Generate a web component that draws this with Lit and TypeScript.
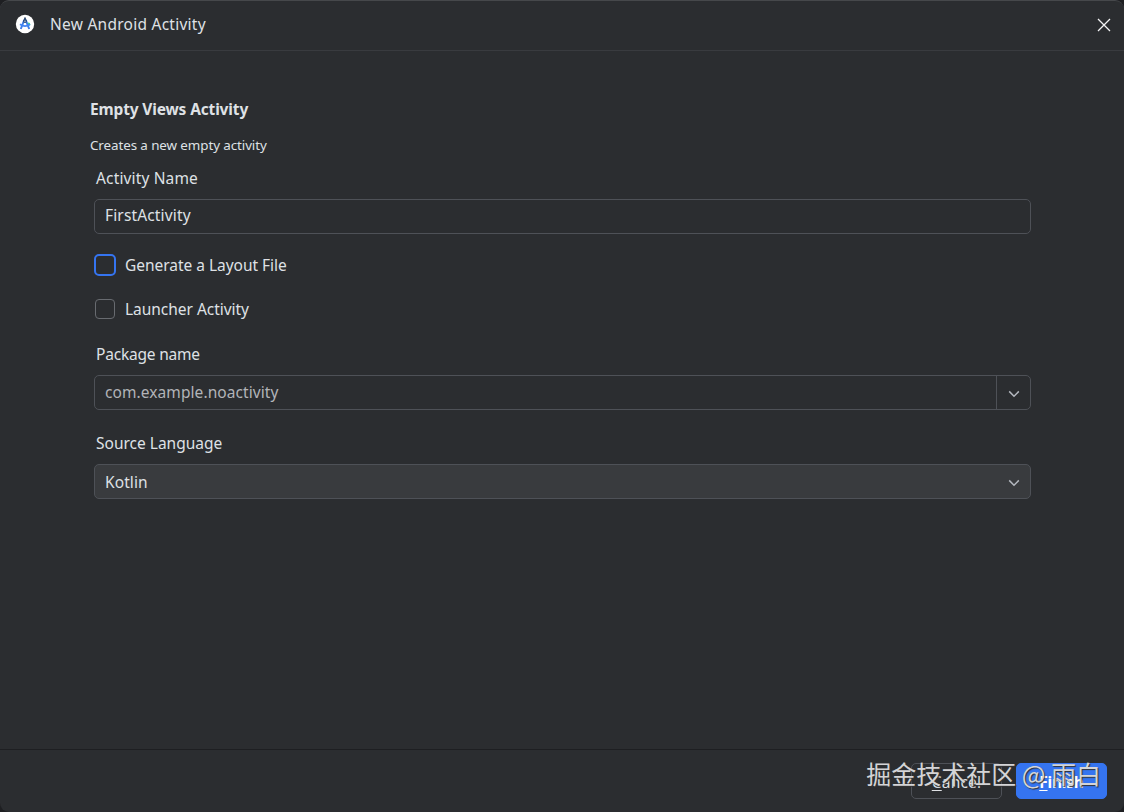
import { LitElement, html, css, svg } from 'lit';
import { customElement, property, state } from 'lit/decorators.js';
import { classMap } from 'lit/directives/class-map.js';

const chevron = html`
  <svg width="12" height="8" viewBox="0 0 12 8" fill="none">
    <path d="M1.2 1.4 L6 6.2 L10.8 1.4" stroke="#b4b8bf" stroke-width="1.5" />
  </svg>
`;

@customElement('dialog-checkbox')
export class DialogCheckbox extends LitElement {
  @property({ type: String }) label = '';
  @property({ type: Boolean }) focused = false;

  static styles = css`
    :host {
      display: flex;
      align-items: center;
      height: 24px;
    }
    .slot {
      display: flex;
      align-items: center;
      justify-content: center;
      width: 22px;
      height: 22px;
      margin-right: 9px;
    }
    .box {
      box-sizing: border-box;
      width: 20px;
      height: 20px;
      border: 1px solid #686b70;
      border-radius: 4px;
    }
    .box.focused {
      width: 22px;
      height: 22px;
      border: 2px solid #3574f0;
      border-radius: 5px;
    }
    .label {
      line-height: 24px;
      letter-spacing: -0.03px;
    }
  `;

  render() {
    return html`
      <div class="slot">
        <div class="${classMap({ box: true, focused: this.focused })}"></div>
      </div>
      <div class="label">${this.label}</div>
    `;
  }
}

@customElement('app-root')
export class AppRoot extends LitElement {
  @state() activityName = 'FirstActivity';
  @state() packageName = 'com.example.noactivity';
  @state() language = 'Kotlin';

  static styles = css`
    :host {
      display: block;
      background: #1e1f22;
      color: #dfe1e5;
      font-family: 'Noto Sans', 'Open Sans', 'Noto Sans CJK SC', sans-serif;
      font-size: 15.5px;
    }
    * {
      box-sizing: border-box;
    }
    .dialog {
      display: flex;
      flex-direction: column;
      position: relative;
      width: 1124px;
      height: 812px;
      overflow: hidden;
      background: #2b2d30;
      border-top: 1px solid #46484b;
      border-radius: 9px;
    }
    .titlebar {
      display: flex;
      align-items: center;
      height: 50px;
      padding: 0 13px 2px 15px;
      border-bottom: 1px solid #393b3f;
    }
    .titlebar svg {
      display: block;
    }
    .logo {
      margin-bottom: 2px;
    }
    .title {
      flex: 1;
      margin-left: 15px;
      padding-bottom: 2px;
      line-height: 24px;
      letter-spacing: 0.25px;
    }
    .content {
      display: flex;
      flex: 1;
      flex-direction: column;
      padding: 46px 93px 0 94px;
    }
    h1 {
      margin: 0 0 0 -4px;
      font-size: 15.5px;
      font-weight: 700;
      line-height: 24px;
      letter-spacing: -0.15px;
    }
    .description {
      margin: 14px 0 0 -4px;
      font-size: 13.4px;
      line-height: 20px;
      letter-spacing: -0.09px;
    }
    .caption {
      margin-left: 2px;
      line-height: 24px;
    }
    .field {
      display: flex;
      align-items: center;
      height: 35px;
      border: 1px solid #4e5157;
      border-radius: 5px;
    }
    .value {
      flex: 1;
      padding: 0 0 1px 10px;
      line-height: 24px;
      letter-spacing: 0.08px;
    }
    .muted {
      color: #b2b4b8;
    }
    .arrow {
      display: flex;
      align-items: center;
      justify-content: center;
      align-self: stretch;
      width: 34px;
      padding-top: 2px;
    }
    .divided {
      border-left: 1px solid #4e5157;
    }
    .select {
      background: #393b3e;
    }
    .select .value {
      padding-bottom: 0;
    }
    .select .arrow {
      width: 33px;
    }
    .name-caption {
      margin-top: 11px;
      letter-spacing: 0.15px;
    }
    .name-field {
      margin-top: 9px;
    }
    .name-field .value {
      padding-bottom: 3px;
      letter-spacing: 0.15px;
    }
    .first-check {
      margin-top: 19px;
    }
    .second-check {
      margin-top: 20px;
    }
    .group-caption {
      margin-top: 21px;
    }
    .package-caption {
      letter-spacing: -0.2px;
    }
    .group-field {
      margin-top: 9px;
    }
    .footer {
      display: flex;
      justify-content: flex-end;
      gap: 14px;
      height: 63px;
      padding: 13px 17px 0 0;
      border-top: 1px solid #1e1f22;
    }
    .button {
      width: 91px;
      height: 36px;
      border: 1px solid #4e5157;
      border-radius: 5px;
      line-height: 36px;
      text-align: center;
      letter-spacing: 0.2px;
    }
    .button u {
      text-underline-offset: 2px;
    }
    .primary {
      border-color: #3574f0;
      background: #3574f0;
      color: #fff;
      font-weight: 700;
      letter-spacing: -0.2px;
    }
    .watermark {
      position: absolute;
      right: 23px;
      bottom: 21px;
      color: #d4d4d6;
      font-family: 'Noto Sans CJK SC', sans-serif;
      font-size: 25px;
      line-height: 36px;
      text-shadow: 1px 1px 1px #333;
      white-space: pre;
    }
  `;

  renderLogo() {
    return html`
      <svg class="logo" width="20" height="20" viewBox="0 0 20 20">
        <circle cx="10" cy="10" r="9.2" fill="#fff" />
        <circle cx="13.6" cy="10.2" r="1.6" fill="#3ddc84" />
        ${svg`
          <path d="M9.2 6 L5.8 15 M10.8 6 L14.2 15" stroke="#3f7fe8" stroke-width="2" fill="none" />
          <path d="M5 10.2 Q10 14 15 10.2" stroke="#4285f4" stroke-width="1.7" fill="none" />
          <path d="M10 3.6 V6" stroke="#2c4668" stroke-width="1.8" />
          <circle cx="10" cy="7" r="2" fill="#294c7c" />
          <circle cx="10" cy="7.2" r="0.6" fill="#fff" />
        `}
      </svg>
    `;
  }

  render() {
    return html`
      <div class="dialog">
        <div class="titlebar">
          ${this.renderLogo()}
          <div class="title">New Android Activity</div>
          <svg width="14" height="14" viewBox="0 0 14 14">
            <path d="M1 1 L13 13 M13 1 L1 13" stroke="#f4f4f5" stroke-width="1.3" />
          </svg>
        </div>

        <div class="content">
          <h1>Empty Views Activity</h1>
          <div class="description">Creates a new empty activity</div>

          <div class="caption name-caption">Activity Name</div>
          <div class="field name-field">
            <div class="value">${this.activityName}</div>
          </div>

          <dialog-checkbox class="first-check" label="Generate a Layout File" focused></dialog-checkbox>
          <dialog-checkbox class="second-check" label="Launcher Activity"></dialog-checkbox>

          <div class="caption group-caption package-caption">Package name</div>
          <div class="field group-field">
            <div class="value muted">${this.packageName}</div>
            <div class="arrow divided">${chevron}</div>
          </div>

          <div class="caption group-caption">Source Language</div>
          <div class="field group-field select">
            <div class="value">${this.language}</div>
            <div class="arrow">${chevron}</div>
          </div>
        </div>

        <div class="footer">
          <div class="button"><u>C</u>ancel</div>
          <div class="button primary"><u>F</u>inish</div>
        </div>
        <div class="watermark">掘金技术社区 @ 雨白</div>
      </div>
    `;
  }
}
